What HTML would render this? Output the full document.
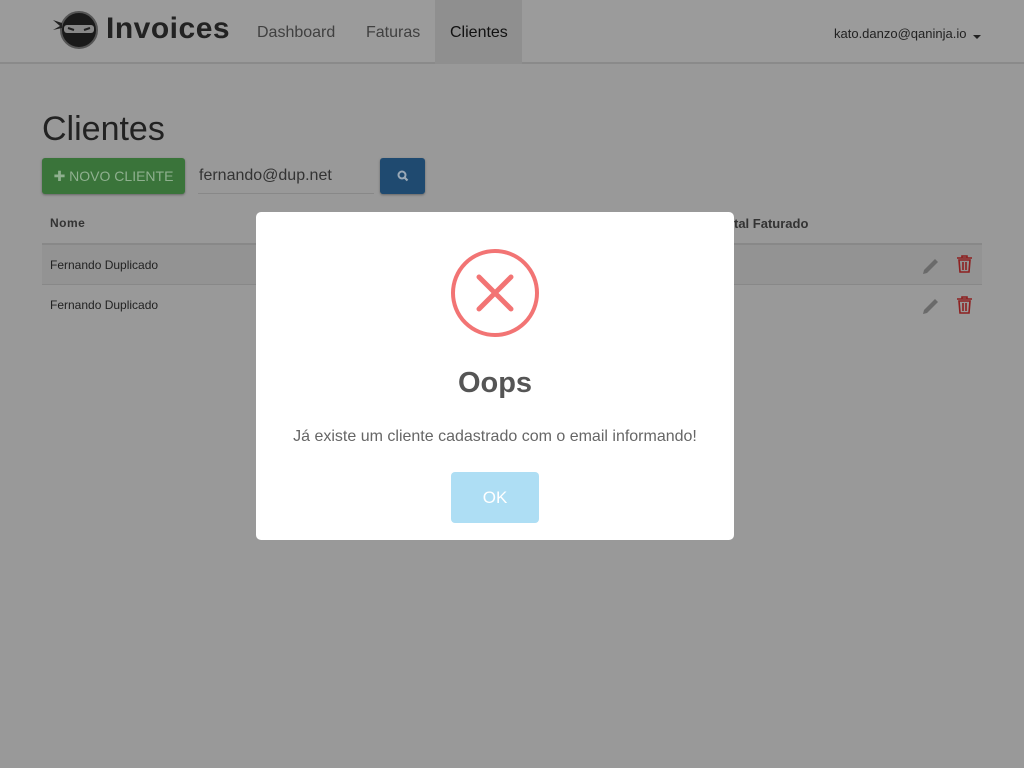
<!DOCTYPE html>
<html><head><meta charset="utf-8"><style>
*{margin:0;padding:0;box-sizing:border-box}
body{width:1024px;height:768px;background:#999;font-family:"Liberation Sans",sans-serif;position:relative;overflow:hidden}
.nav{position:absolute;left:0;top:0;width:1024px;height:64px;background:#9b9b9b;border-bottom:2px solid #8a8a8a}
.nav a{position:absolute;top:2px;height:62px;line-height:62px;font-size:16px;color:#404040}
.act{background:#8f8f8f;color:#111!important;top:0!important;height:64px!important;line-height:66px!important}
h1{position:absolute;left:42px;top:110px;font-size:34px;font-weight:normal;color:#222}
.btn{position:absolute;border-radius:3px}
.t{position:absolute;font-size:12px;color:#222}
.icn{position:absolute}
.modal{position:absolute;left:256px;top:212px;width:478px;height:328px;background:#fff;border-radius:5px}
</style></head><body>
<div class="nav">
<svg style="position:absolute;left:52px;top:10px" width="48" height="40" viewBox="0 0 48 40">
<circle cx="27" cy="20" r="18" fill="#1a1a1a" stroke="#555" stroke-width="2"/>
<rect x="12" y="15" width="30" height="8" rx="3" fill="#888"/>
<path d="M16 18l6 2M38 18l-6 2" stroke="#222" stroke-width="2"/>
<path d="M10 13L1 10 8 16 1 20 10 18z" fill="#222"/>
</svg>
<span style="position:absolute;left:106px;top:12px;font-size:30px;font-weight:bold;color:#222;letter-spacing:0.5px">Invoices</span>
<a style="left:257px">Dashboard</a>
<a style="left:366px">Faturas</a>
<a class="act" style="left:435px;width:87px;padding-left:15px">Clientes</a>
<span style="position:absolute;left:834px;top:26px;font-size:13px;color:#222">kato.danzo@qaninja.io</span>
<span style="position:absolute;left:973px;top:35px;border-left:4px solid transparent;border-right:4px solid transparent;border-top:4px solid #222"></span>
</div>
<h1>Clientes</h1>
<div class="btn" style="left:42px;top:158px;width:143px;height:36px;background:#3a743a;color:#8fb08f;font-size:14px;line-height:36px;text-align:center;box-shadow:0 1px 2px #666">✚ NOVO CLIENTE</div>
<div style="position:absolute;left:198px;top:158px;width:176px;height:36px;border-bottom:1px solid #888;font-size:16px;line-height:36px;color:#333;padding-left:1px">fernando@dup.net</div>
<div class="btn" style="left:380px;top:158px;width:45px;height:36px;background:#1f4a70;box-shadow:0 1px 2px #666">
<svg width="45" height="36"><circle cx="22" cy="17" r="3.5" fill="none" stroke="#9aa9b7" stroke-width="2"/><path d="M24.5 19.5l3 3" stroke="#9aa9b7" stroke-width="2.2"/></svg></div>
<div class="t" style="left:50px;top:216px;font-weight:bold;color:#333;letter-spacing:0.5px">Nome</div>
<div class="t" style="left:734px;top:216px;font-weight:bold;color:#333;font-size:13px">tal Faturado</div>
<div style="position:absolute;left:42px;top:243px;width:940px;height:2px;background:#888"></div>
<div style="position:absolute;left:42px;top:245px;width:940px;height:40px;background:#939393;border-bottom:1px solid #888"></div>
<div class="t" style="left:50px;top:258px">Fernando Duplicado</div>
<div class="t" style="left:50px;top:298px">Fernando Duplicado</div>
<svg class="icn" style="left:922px;top:254px" width="60" height="60" viewBox="0 0 60 60">
<g fill="#6a6a6a"><path d="M2 16l11-11 3 3-11 11-4 1z"/><path d="M2 56l11-11 3 3-11 11-4 1z"/></g>
<g fill="none" stroke="#8e2020" stroke-width="1.6"><path d="M35 4h15M40 4v-2h5v2M37 6h11l-1 12h-9z M41 8v8M44 8v8"/><path d="M35 45h15M40 45v-2h5v2M37 47h11l-1 12h-9z M41 49v8M44 49v8"/></g>
</svg>
<div class="modal">
<svg style="position:absolute;left:195px;top:37px" width="88" height="88"><circle cx="44" cy="44" r="42" fill="none" stroke="#f27474" stroke-width="4"/><path d="M28 28l32 32M60 28l-32 32" stroke="#f27474" stroke-width="5" stroke-linecap="round"/></svg>
<div style="position:absolute;left:0;width:478px;top:155px;text-align:center;font-size:29px;font-weight:bold;color:#555">Oops</div>
<div style="position:absolute;left:0;width:478px;top:216px;text-align:center;font-size:16px;color:#666">Já existe um cliente cadastrado com o email informando!</div>
<div style="position:absolute;left:195px;top:260px;width:88px;height:51px;background:#aedef4;border-radius:4px;color:#fff;font-size:17px;text-align:center;line-height:51px">OK</div>
</div>
</body></html>
